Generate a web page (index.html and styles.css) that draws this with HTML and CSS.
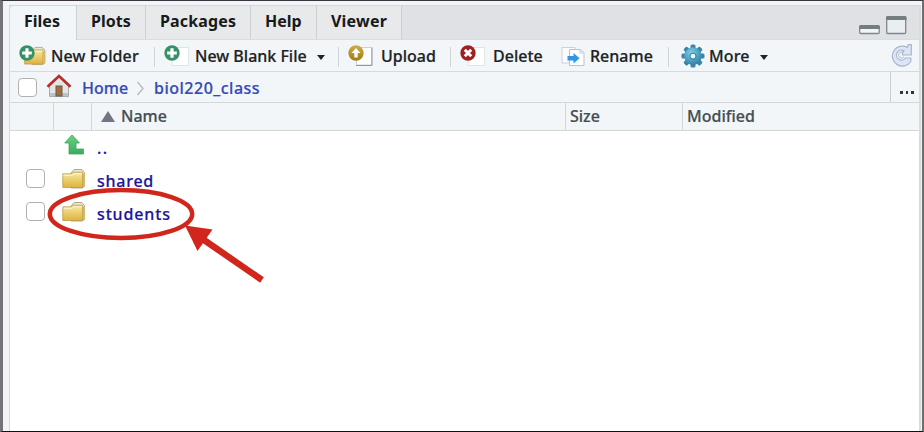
FILE: index.html
```html
<!DOCTYPE html>
<html lang="en">
<head>
<meta charset="utf-8">
<title>Files</title>
<link rel="stylesheet" href="styles.css">
</head>
<body>
<svg class="defs" width="0" height="0" aria-hidden="true">
  <defs>
    <linearGradient id="gold" x1="0" y1="0" x2="0" y2="1"><stop offset="0" stop-color="#f6eaa2"/><stop offset="1" stop-color="#dfb23c"/></linearGradient>
    <linearGradient id="brass" x1="0" y1="0" x2="0" y2="1"><stop offset="0" stop-color="#d0ad49"/><stop offset="1" stop-color="#a17b14"/></linearGradient>
    <linearGradient id="leaf" x1="0" y1="0" x2="0" y2="1"><stop offset="0" stop-color="#6ad184"/><stop offset="1" stop-color="#38ad5d"/></linearGradient>
    <radialGradient id="cog" cx=".4" cy=".3" r=".7"><stop offset="0" stop-color="#79cfe8"/><stop offset="1" stop-color="#3582aa"/></radialGradient>
    <symbol id="folder" viewBox="0 0 24 21">
      <path d="M9 5 12 1.500h8l2.500 3v14L20 20H9z" fill="#e7e5dc" stroke="#b5aa87"/>
      <path d="M21 5.500h2V18l-2 2z" fill="#d6b866"/>
      <path d="M.8 5.800h8.500l2-1.600h9.200v15.300H.8z" fill="url(#gold)" stroke="#bd9b45" stroke-width=".8"/>
      <path d="M1.500 7.300h8.600l2-1.500h8" fill="none" stroke="#fdf7cb"/>
    </symbol>
    <symbol id="plus" viewBox="0 0 16 16">
      <circle cx="8" cy="8" r="7.700" fill="#359166"/>
      <path d="M8 3.200v9.600M3.200 8h9.600" stroke="#fff" stroke-width="3.200"/>
    </symbol>
  </defs>
</svg>
<div class="pane">
  <nav class="tabs">
    <div class="tab files active"><span>Files</span></div>
    <div class="tab plots"><span>Plots</span></div>
    <div class="tab packages"><span>Packages</span></div>
    <div class="tab help"><span>Help</span></div>
    <div class="tab viewer"><span>Viewer</span></div>
    <svg class="window-icons" width="50" height="22" viewBox="0 0 50 22">
      <rect x="1.700" y="11" width="19.500" height="7.500" rx="1" fill="#f2f4f5" stroke="#7e878b" stroke-width="1.300"/>
      <path d="M1.200 14v-3l1-1h18.500l1 1v3z" fill="#737d82"/>
      <rect x="28.700" y="2" width="19" height="16.500" rx="1" fill="#ebeef0" stroke="#7e878b" stroke-width="1.300"/>
      <path d="M28 5V2l1-1h18.500l1 1v3z" fill="#737d82"/>
    </svg>
  </nav>
  <div class="toolbar">
    <div class="tool new-folder">
      <svg width="28" height="24" viewBox="0 0 28 24"><use href="#folder" x="4" y="2" width="24" height="19.500"/><use href="#plus" x="0" y="1" width="16" height="16"/></svg>
      <span>New Folder</span>
    </div>
    <div class="tool new-file">
      <svg width="28" height="24" viewBox="0 0 28 24"><rect x="8" y="3.500" width="16.500" height="18" fill="#fff" stroke="#dfe4e8"/><use href="#plus" x="0" y="1" width="16" height="16"/></svg>
      <span>New Blank File</span><i class="caret"></i>
    </div>
    <div class="tool upload">
      <svg width="28" height="24" viewBox="0 0 28 24"><path d="M8.500 3.500h15v17.500h-15z" fill="#fff" stroke="#ccd1d8"/><path d="M8 21.500h16V3.500" fill="none" stroke="#8e99a6"/><circle cx="8" cy="9" r="7.700" fill="url(#brass)"/><path d="M8 4 3.500 9H6.300v4.500h3.400V9h2.800z" fill="#fff"/></svg>
      <span>Upload</span>
    </div>
    <div class="tool delete">
      <svg width="28" height="24" viewBox="0 0 28 24"><rect x="8" y="3.500" width="16.500" height="18" fill="#fff" stroke="#e0e4e7"/><circle cx="8" cy="9" r="7.700" fill="#9e2022"/><path d="m4.800 5.800 6.400 6.400m0-6.400-6.400 6.400" stroke="#fff" stroke-width="3"/></svg>
      <span>Delete</span>
    </div>
    <div class="tool rename">
      <svg width="24" height="24" viewBox="0 0 24 24"><rect x="1" y="3.500" width="13" height="15.500" fill="#fafcfd" stroke="#cbd2da"/><path d="M8.500 5.500h11l3.500 3V21.500H8.500z" fill="#fff" stroke="#b9c1cd"/><path d="M19 5v4h4" fill="#e7ebf0" stroke="#c8ced7"/><path d="M6.500 12h6V9l6 5.300-6 5.300v-3h-6z" fill="#3196e3"/></svg>
      <span>Rename</span>
    </div>
    <div class="tool more">
      <svg width="24" height="24" viewBox="0 0 24 24"><g fill="#3a84a9"><rect x="9.500" y=".6" width="5" height="23" rx="1.500"/><rect x="9.500" y=".6" width="5" height="23" rx="1.500" transform="rotate(45 12 12.100)"/><rect x="9.500" y=".6" width="5" height="23" rx="1.500" transform="rotate(90 12 12.100)"/><rect x="9.500" y=".6" width="5" height="23" rx="1.500" transform="rotate(135 12 12.100)"/></g><circle cx="12" cy="12.100" r="8.800" fill="url(#cog)"/><circle cx="12" cy="12.100" r="3" fill="#eef5f7" stroke="#337b9e"/></svg>
      <span>More</span><i class="caret"></i>
    </div>
    <svg class="refresh" width="23" height="24" viewBox="0 0 23 24"><path d="M17.300 4.400A10 10 0 1 0 20.800 18.500V15H15.500A5 5 0 1 1 14 7.800L12.500 9.300V12H21.300V1.700H18.300Z" fill="#dce4f7" stroke="#a9b5ca" stroke-width="1.200"/><path d="M13.500 9.800A3 3 0 1 0 13.800 14" fill="none" stroke="#a9b5ca"/></svg>
  </div>
  <div class="crumbs">
    <i class="box"></i>
    <svg class="home" width="26" height="24" viewBox="0 0 26 24"><path d="M3.500 12 13 3l9.500 9v10.500h-19z" fill="#e3e5e7" stroke="#a6adb3"/><path d="M4 19h18v3H4z" fill="#bdc3cb"/><rect x="10" y="12" width="6" height="10" fill="#9b7042" stroke="#71583c"/><path d="M1.500 12.800 13 2l11.500 10.800" fill="none" stroke="#b72e27" stroke-width="2.700"/></svg>
    <a class="home-link">Home</a>
    <svg class="chevron" width="9" height="15" viewBox="0 0 9 15"><path d="m1.500 1 5.500 6.500L1.500 14" fill="none" stroke="#b6bbbf" stroke-width="1.400"/></svg>
    <a class="path-link">biol220_class</a>
    <div class="browse"><i></i><i></i><i></i></div>
  </div>
  <div class="columns">
    <div></div><div></div>
    <div class="name"><i class="sort"></i><span>Name</span></div>
    <div class="size"><span>Size</span></div>
    <div class="modified"><span>Modified</span></div>
  </div>
  <main class="list">
    <div class="row up"><svg width="21" height="22" viewBox="0 0 21 22"><path d="M8 1 15.500 9H12v6h7.500v5H5V9H.7z" fill="url(#leaf)" stroke="#3fa65f" stroke-width=".8"/></svg><a>..</a></div>
    <div class="row"><i class="box"></i><svg width="24" height="21"><use href="#folder" width="24" height="21"/></svg><a class="shared">shared</a></div>
    <div class="row"><i class="box"></i><svg width="24" height="21"><use href="#folder" width="24" height="21"/></svg><a class="students">students</a></div>
  </main>
</div>
<svg class="callout" width="250" height="120" viewBox="0 0 250 120"><ellipse cx="81" cy="43" rx="71.200" ry="24" fill="none" stroke="#d1261c" stroke-width="4.500"/><path d="M222 109 164 69" stroke="#d1261c" stroke-width="6.500"/><path d="m145 54.500 27.500 4-15 21.500z" fill="#d1261c"/></svg>
</body>
</html>
```
FILE: styles.css
```css
* { box-sizing: border-box; }
body {
  margin: 0;
  height: 432px;
  padding: 4px 1px 0 7px;
  border: solid #000;
  border-width: 1px 2px 1px 3px;
  border-color: #39343d #6c6f70 #111 #747477;
  background: #f2f4f7;
  font: 500 16px/20px "Noto Sans", sans-serif;
  color: #202224;
  overflow: hidden;
}
.defs { position: absolute; }
svg { display: block; flex: none; }
span, a { white-space: nowrap; -webkit-text-stroke: .2px currentColor; }
.pane { height: 426px; border-right: 2px solid #d6dddc; background: #fff; box-shadow: -1px 0 #d6dadd; }
.tabs { height: 35px; display: flex; background: #e0e1e5; border-top: 1px solid #d3d5d8; border-bottom: 1px solid #dadddf; }
.tab { padding: 5px 0 0 14px; border-right: 1px solid #cdd0d3; background: #e8e9eb; font-weight: 700; color: #17191a; }
.tab span { -webkit-text-stroke: 0; }
.active { margin-bottom: -1px; background: #f2f6f8; border-radius: 4px 0 0; }
.files { width: 67px; }
.plots { width: 69px; }
.packages { width: 105px; letter-spacing: .15px; }
.help { width: 66px; }
.viewer { width: 85px; letter-spacing: .2px; }
.window-icons { margin: 9px 11px 0 auto; }
.toolbar { height: 32px; display: flex; padding-left: 9px; background: #f2f6f8; border-bottom: 1px solid #d6dadd; }
.tool { display: flex; padding-top: 4px; }
.tool span { padding-top: 2px; }
.tool svg { margin-right: 4px; }
.tool:not(.delete):not(.more)::after { content: ""; width: 1px; height: 20px; background: #d0d4d7; margin: 3px 0 0 auto; }
.new-folder { width: 136px; letter-spacing: .1px; }
.new-file { width: 175px; margin-left: 9px; }
.upload { width: 103px; margin-left: 9px; }
.delete { width: 102px; margin-left: 9px; }
.rename { width: 107px; }
.more { margin-left: 12px; letter-spacing: .1px; }
.upload svg, .delete svg { margin-right: 5px; }
.new-file svg { margin-right: 3px; }
.rename svg { margin: 0 5px 0 -1px; }
.caret { width: 0; border: solid transparent; border-width: 5px 4.500px 0; border-top-color: #222; height: 5px; margin: 11px 0 0 10px; }
.refresh { margin: 3px 6px 0 auto; }
.crumbs { height: 31px; display: flex; background: #f2f6f8; border-bottom: 1px solid #d3d7da; }
.box { flex: none; width: 19px; height: 19px; border: 1.500px solid #afb1b2; border-radius: 4px; background: #fff; }
.crumbs .box { margin: 6px 0 0 8px; }
.home { margin: 2px 0 0 9px; }
.crumbs a { color: #344ab8; padding-top: 6px; }
.home-link { width: 45px; margin-left: 10px; }
.chevron { margin: 9px 9px 0 9px; }
.path-link { letter-spacing: .5px; }
.browse { width: 29px; margin-left: auto; padding: 19px 0 0 9px; border-left: 1px solid #c8cdd0; display: flex; gap: 3px; }
.browse i { width: 2.500px; height: 3px; background: #333; }
.columns { height: 28px; display: grid; grid-template-columns: 44px 38px 474px 117px 1fr; background: #f2f6f8; border-bottom: 1px solid #d3d7da; color: #454d53; }
.columns div { display: flex; padding-top: 3px; border-right: 1px solid #d2d6d9; }
.columns .name { padding-left: 9px; }
.columns .modified { border: 0; }
.size, .modified { padding-left: 4px; }
.sort { width: 14px; height: 11px; margin: 5px 6px 0 0; background: #707783; clip-path: polygon(50% 0, 100% 100%, 0 100%); }
.list { padding-top: 3px; }
.row { display: flex; height: 33px; padding: 1px 0 0 16px; }
.row a { color: #1c149b; padding-top: 3px; margin-left: 11px; }
.row .box { margin: 1px 17px 0 0; }
.shared { letter-spacing: .75px; }
.students { letter-spacing: .85px; }
.row.up { padding: 0 0 0 54px; }
.row.up a { margin-left: 12px; padding-top: 4px; letter-spacing: 1.500px; }
.callout { position: absolute; left: 40px; top: 171px; }
```
